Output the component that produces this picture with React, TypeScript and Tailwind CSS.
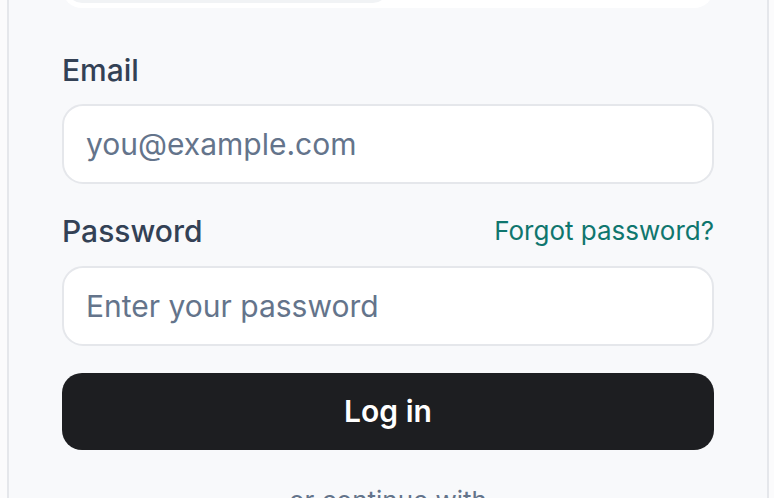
import { useState } from 'react';

export default function App() {
  const [email, setEmail] = useState('');
  const [password, setPassword] = useState('');

  return (
    <div className="h-[498px] overflow-hidden bg-[#fbfbfc] font-['Inter','Noto_Sans',sans-serif]">
      <div className="ml-[7px] w-[762px] min-h-full border-x-2 border-[#e5e7eb] bg-[#f8f9fb] px-[53px]">
        {/* Tabs (scrolled off the top) */}
        <div className="-mt-[56px] flex h-[64px] rounded-[20px] bg-white p-[5px]">
          <div className="flex-1 rounded-[15px] bg-[#f1f3f5]" />
          <div className="flex-1" />
        </div>

        <form className="pt-[44px]" onSubmit={(e) => e.preventDefault()}>
          <label className="block text-[30px] leading-[36px] font-medium text-[#334155]">Email</label>
          <input
            type="email"
            value={email}
            onChange={(e) => setEmail(e.target.value)}
            placeholder="you@example.com"
            className="mt-4 block h-[80px] w-full rounded-[21px] border-2 border-[#e5e7eb] bg-white px-[22px] text-[30px] text-[#0f172a] placeholder:text-[#64748b] focus:outline-none"
          />

          <div className="mt-[29px] flex items-center justify-between">
            <label className="text-[30px] leading-[36px] font-medium text-[#334155]">Password</label>
            <a href="#" className="text-[26px] leading-[36px] text-[#0f766e]">
              Forgot password?
            </a>
          </div>
          <input
            type="password"
            value={password}
            onChange={(e) => setPassword(e.target.value)}
            placeholder="Enter your password"
            className="mt-[17px] block h-[80px] w-full rounded-[21px] border-2 border-[#e5e7eb] bg-white px-[22px] text-[30px] text-[#0f172a] placeholder:text-[#64748b] focus:outline-none"
          />

          <button
            type="submit"
            className="mt-[27px] flex h-[77px] w-full items-center justify-center rounded-[20px] bg-[#1d1e21] text-[30px] font-semibold text-white"
          >
            Log in
          </button>

          <p className="mt-[35px] text-center text-[26px] leading-[32px] text-[#64748b]">or continue with</p>
        </form>
      </div>
    </div>
  );
}
